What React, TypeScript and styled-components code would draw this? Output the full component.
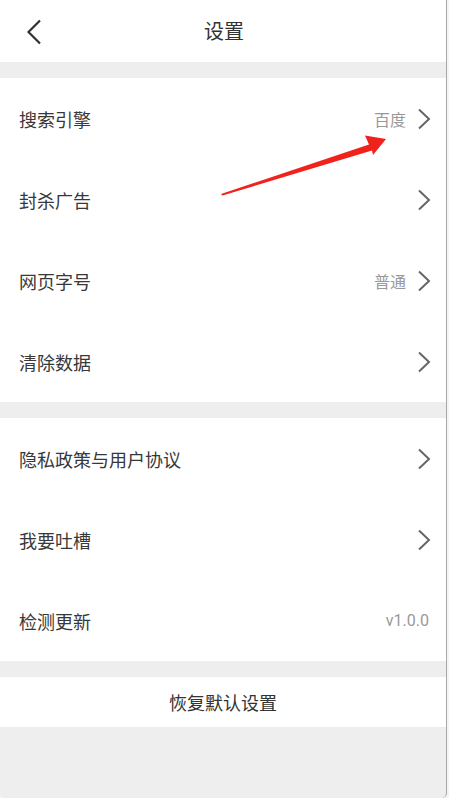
import React from "react";
import styled, { createGlobalStyle } from "styled-components";

const Global = createGlobalStyle`
  html, body { margin: 0; padding: 0; background: #e9e9e9; }
  body { font-family: "Noto Sans CJK SC", "Noto Sans", sans-serif; }
  * { box-sizing: border-box; }
`;

const Page = styled.div`
  position: relative;
  width: 449px;
  height: 798px;
  display: flex;
  background: #f4f4f4;
`;

const Panel = styled.div`
  width: 447px;
  height: 798px;
  background: #eeeeee;
  border-right: 1px solid #a8a8a8;
  border-radius: 0 0 5px 5px;
  display: flex;
  flex-direction: column;
  overflow: hidden;
`;

const Header = styled.div`
  height: 62px;
  background: #fff;
  display: grid;
  grid-template-columns: 60px 1fr 60px;
  align-items: center;
`;

const BackBtn = styled.div`
  display: flex;
  align-items: center;
  padding-left: 26px;
  padding-top: 2px;
`;

const Title = styled.div`
  text-align: center;
  font-size: 20px;
  color: #333;
  line-height: 1;
  padding-left: 2px;
`;

const Gap = styled.div`
  height: 16px;
  flex-shrink: 0;
`;

const Group = styled.div`
  background: #fff;
  display: flex;
  flex-direction: column;
`;

const Row = styled.div`
  height: 81px;
  display: flex;
  align-items: center;
  padding: 0 15px 0 19px;
`;

const Label = styled.div`
  flex: 1;
  font-size: 18px;
  color: #383838;
`;

const Value = styled.div<{ $chev?: boolean }>`
  font-size: 16px;
  color: #999;
  margin-right: ${(p) => (p.$chev ? "11px" : "2px")};
  font-family: ${(p) => (p.$chev ? `"Noto Sans CJK SC", sans-serif` : `"Roboto", "Noto Sans", sans-serif`)};
`;

const ResetBtn = styled.div`
  height: 50px;
  background: #fff;
  display: flex;
  align-items: center;
  justify-content: center;
  font-size: 18px;
  color: #333;
`;

const ArrowLayer = styled.svg`
  position: absolute;
  left: 0;
  top: 0;
  pointer-events: none;
`;

const Chevron = () => (
  <svg width="14" height="22" viewBox="0 0 14 22">
    <polyline points="2,1.5 12,11 2,20.5" fill="none" stroke="#666" strokeWidth="2" />
  </svg>
);

const Back = () => (
  <svg width="16" height="26" viewBox="0 0 16 26">
    <polyline points="14,1.5 2.5,13 14,24.5" fill="none" stroke="#333" strokeWidth="2.2" />
  </svg>
);

type Item = { label: string; value?: string; chevron: boolean };

const group1: Item[] = [
  { label: "搜索引擎", value: "百度", chevron: true },
  { label: "封杀广告", chevron: true },
  { label: "网页字号", value: "普通", chevron: true },
  { label: "清除数据", chevron: true },
];

const group2: Item[] = [
  { label: "隐私政策与用户协议", chevron: true },
  { label: "我要吐槽", chevron: true },
  { label: "检测更新", value: "v1.0.0", chevron: false },
];

const Rows = ({ items }: { items: Item[] }) => (
  <Group>
    {items.map((it) => (
      <Row key={it.label}>
        <Label>{it.label}</Label>
        {it.value && <Value $chev={it.chevron}>{it.value}</Value>}
        {it.chevron && <Chevron />}
      </Row>
    ))}
  </Group>
);

export default function App() {
  return (
    <Page>
      <Global />
      <Panel>
        <Header>
          <BackBtn>
            <Back />
          </BackBtn>
          <Title>设置</Title>
          <div />
        </Header>
        <Gap />
        <Rows items={group1} />
        <Gap />
        <Rows items={group2} />
        <Gap />
        <ResetBtn>恢复默认设置</ResetBtn>
      </Panel>
      <ArrowLayer width="449" height="798" viewBox="0 0 449 798">
        <polygon
          points="221,194 369,144.5 365,135.5 386,139 373,155 372,150.5 222.5,195.5"
          fill="#f0231c"
        />
      </ArrowLayer>
    </Page>
  );
}
